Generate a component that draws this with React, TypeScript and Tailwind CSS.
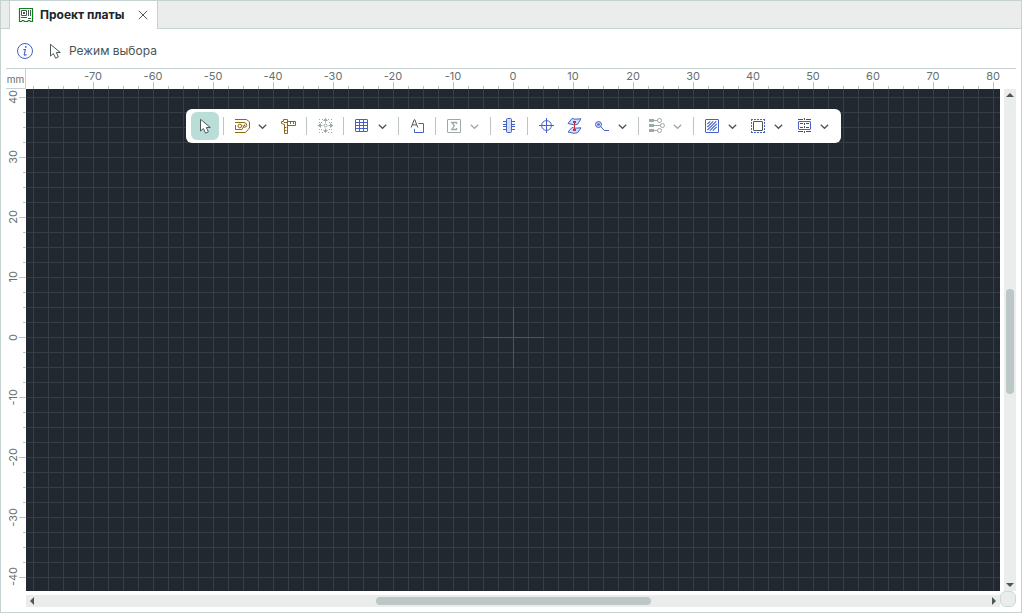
import React from "react";

const BLUE = "#4560cc";
const OCHRE = "#8f680f";
const DIM = "#9ba9a7";
const DARK = "#4c5856";

function Glyph({ color, children }: { color: string; children: React.ReactNode }) {
  return (
    <svg viewBox="0 0 28 28" className="size-7 shrink-0" fill="none" stroke={color} aria-hidden="true">
      {children}
    </svg>
  );
}

function CursorShape() {
  return (
    <path
      d="M9.5 7.3V19L12.4 16.6L14.6 21.2L17.4 19.9L15.3 15.5H19.3Z"
      fill="#fff"
      stroke={DARK}
      strokeLinejoin="round"
    />
  );
}

const cursor = (
  <Glyph color={DARK}>
    <CursorShape />
  </Glyph>
);

const track = (
  <Glyph color={OCHRE}>
    <path d="M7 7.5H18.5L21.5 10V16L17.5 20.5H7" />
    <path d="M7 10.5H16Q18.8 11 18.8 13.3Q18.8 15 16.8 15.3Q15 15.3 14.8 13.5" />
    <path d="M7.5 13V17.5H14L16.5 12.8" />
    <circle cx="11.8" cy="14" r="1.8" />
    <circle cx="16.7" cy="13.2" r="0.8" fill={OCHRE} stroke="none" />
  </Glyph>
);

const caliper = (
  <Glyph color={OCHRE}>
    <path d="M9.5 7.5H13.5V21.5H10.5V12.5L7.5 11.5V9.5H9.5Z" />
    <path d="M13.5 9.5H21.5V13.5H13.5M16.5 9.5V12M19.5 9.5V12M11 15.5H12.5M11 18.5H12.5M10 10.5H13" />
  </Glyph>
);

const spread = (
  <Glyph color={DIM}>
    <path
      d="M8 7.5H9M11 7.5H12M17 7.5H18M20 7.5H21M8 10.5H9M10 10.5H11M18 10.5H19M20 10.5H21M8 17.5H9M10 17.5H11M18 17.5H19M20 17.5H21M8 20.5H9M11 20.5H12M17 20.5H18M20 20.5H21"
    />
    <circle cx="14.5" cy="13.5" r="1.5" />
    <path
      d="M14.5 6L17 9H12ZM14.5 21L17 18H12ZM6.5 13.5L10 11V16ZM22.5 13.5L19 11V16Z"
      fill={DIM}
      stroke="none"
    />
    <path d="M14.5 8V10.5M14.5 16.5V19M9 13.5H11.5M17.5 13.5H20" />
  </Glyph>
);

const table = (
  <Glyph color={BLUE}>
    <rect x="7.5" y="7.5" width="12" height="12" rx="0.5" />
    <path d="M8 10.5H19M8 13.5H19M8 16.5H19M11.5 8V19M15.5 8V19" />
  </Glyph>
);

const textFrame = (
  <Glyph color={BLUE}>
    <path d="M15.5 11.5H20.5V20.5H11.5V17" />
    <path d="M8.2 15.5L11.2 7.7H11.8L14.8 15.5M9.3 12.9H13.7" stroke={DARK} />
  </Glyph>
);

const sum = (
  <Glyph color={DIM}>
    <rect x="7.5" y="7.5" width="13" height="13" rx="0.5" />
    <path d="M16.5 12V10.5H11.8L14.3 13.8L11.8 17.5H16.5V16" strokeWidth="1.3" />
  </Glyph>
);

const chip = (
  <Glyph color={BLUE}>
    <path d="M8 9.5H20M8 12.5H20M8 14.5H20M8 17.5H20" />
    <rect x="11.5" y="6.5" width="5" height="14" rx="1" fill="#d3defa" />
  </Glyph>
);

const target = (
  <Glyph color={BLUE}>
    <circle cx="14.5" cy="13.5" r="4.9" />
    <path d="M7 13.5H22M14.5 6V21" />
  </Glyph>
);

const layers = (
  <Glyph color={BLUE}>
    <g fill="#d3defa">
      <path d="M12 6.5L15 7.2L21 6.8L17.5 12.3L14 12.8L8 11.5Z" />
      <path d="M12 15.5L15 16.2L21 15.8L17.5 20.8L14 21.3L8 20Z" />
    </g>
    <path d="M14.5 10V18" stroke="#c4303a" />
    <path d="M13 10H16M13 18H16" stroke="#c4303a" strokeWidth="2" />
  </Glyph>
);

const lead = (
  <Glyph color={BLUE}>
    <circle cx="10.5" cy="12.5" r="3" fill="#d3defa" />
    <circle cx="10.5" cy="12.5" r="1.3" fill={BLUE} stroke="none" />
    <path d="M12.8 14.7L16.3 18.5H21" />
  </Glyph>
);

const nets = (
  <Glyph color={DIM}>
    <path d="M6 7H11V10H6ZM6 12H11V15H6ZM6 17H11V20H6Z" fill={DIM} stroke="none" />
    <path d="M11 8.5H14.5M11 13.5H17.5M11 18.5H14.5" />
    <circle cx="16.5" cy="8.5" r="2" />
    <circle cx="19.5" cy="13.5" r="2" />
    <circle cx="16.5" cy="18.5" r="2" />
  </Glyph>
);

const hatch = (
  <Glyph color={BLUE}>
    <rect x="7.5" y="7.5" width="13" height="13" rx="0.5" />
    <path d="M9.3 12.2L12.2 9.3M9.3 15.2L15.2 9.3M9.3 18.2L18.2 9.3M11.8 18.7L18.7 11.8M14.8 18.7L18.7 14.8" strokeWidth="1.2" />
  </Glyph>
);

const region = (
  <Glyph color={BLUE}>
    <path d="M7 7.5H21M7 20.5H21M7.5 7V21M20.5 7V21" strokeDasharray="2 1" />
    <rect x="9.5" y="9.5" width="9" height="9" rx="0.5" stroke={DARK} />
  </Glyph>
);

const section = (
  <Glyph color={BLUE}>
    <path d="M8 7.5H13M16 7.5H21M8 19.5H13M16 19.5H21M10 11.5H13M16 11.5H19M10 15.5H13M16 15.5H19" stroke={DARK} />
    <rect x="8.5" y="9.5" width="12" height="8" rx="0.5" />
    <path d="M14.5 6V8M14.5 11V13M14.5 14V16M14.5 19V21" stroke={DARK} />
  </Glyph>
);

type Tool = { label: string; icon: React.ReactNode; menu?: boolean; dim?: boolean; active?: boolean };

const groups: Tool[][] = [
  [{ label: "Выбор", icon: cursor, active: true }],
  [
    { label: "Трек", icon: track, menu: true },
    { label: "Измерение", icon: caliper },
  ],
  [{ label: "Размещение", icon: spread, dim: true }],
  [{ label: "Таблица", icon: table, menu: true }],
  [{ label: "Текст", icon: textFrame }],
  [{ label: "Размер", icon: sum, menu: true, dim: true }],
  [{ label: "Компонент", icon: chip }],
  [
    { label: "Отверстие", icon: target },
    { label: "Переход", icon: layers },
    { label: "Вывод", icon: lead, menu: true },
  ],
  [{ label: "Цепи", icon: nets, menu: true, dim: true }],
  [
    { label: "Заливка", icon: hatch, menu: true },
    { label: "Регион", icon: region, menu: true },
    { label: "Вырез", icon: section, menu: true },
  ],
];

function ToolButton({ tool }: { tool: Tool }) {
  return (
    <>
      <button
        aria-label={tool.label}
        disabled={tool.dim}
        className={tool.active ? "rounded-md bg-[#bbddd8]" : "rounded-md"}
      >
        {tool.icon}
      </button>
      {tool.menu && (
        <button aria-label={tool.label + ": меню"} disabled={tool.dim} className="flex w-[18px] items-center">
          <svg viewBox="0 0 13 28" className="h-7 w-[13px]" fill="none" aria-hidden="true">
            <path d="M2.8 12.8L6.5 16.3L10.2 12.8" stroke={tool.dim ? DIM : DARK} strokeWidth="1.3" />
          </svg>
        </button>
      )}
    </>
  );
}

function Toolbar() {
  return (
    <div role="toolbar" className="flex items-center rounded-md bg-white px-[5px] py-[3px]">
      {groups.map((group, i) => (
        <React.Fragment key={i}>
          {i > 0 && <span className="mr-1 ml-1 h-[18px] w-px bg-[#b9c6c4]" />}
          {group.map((tool) => (
            <ToolButton key={tool.label} tool={tool} />
          ))}
        </React.Fragment>
      ))}
    </div>
  );
}

const xMarks = [-70, -60, -50, -40, -30, -20, -10, 0, 10, 20, 30, 40, 50, 60, 70, 80];
const yMarks = [40, 30, 20, 10, 0, -10, -20, -30, -40];

function Arrow({ label, d }: { label: string; d: string }) {
  return (
    <button aria-label={label} className="size-3 shrink-0">
      <svg viewBox="0 0 12 12" className="size-3" aria-hidden="true">
        <path d={d} fill={DARK} />
      </svg>
    </button>
  );
}

export default function App() {
  return (
    <div className="flex h-screen flex-col border border-[#c6d2d1] bg-white font-['Inter','Noto_Sans',sans-serif] text-[#4a5553]">
      <header className="flex h-7 shrink-0 bg-[#ebedec]">
        <span className="w-2 border-b border-[#c6d2d1]" />
        <div className="flex items-center border-x border-[#c6d2d1] bg-white pr-[6px] pl-2">
          <svg viewBox="0 0 16 16" className="size-4" fill="none" aria-hidden="true">
            <path d="M1.5 1.5H14.5V14.5H12.5L11.5 13.5H10.5L9.5 14.5H6.5L5.5 13.5H4.5L3.5 14.5H1.5Z" stroke="#12801c" strokeWidth="1.2" />
            <path d="M3.5 3.5H8.5V8.5H3.5ZM5 5.5H7M5 6.5H7M10.5 3V9M12.5 3V9M3 10.5H9M10 11.5H13" stroke={DARK} />
          </svg>
          <span className="ml-[6px] text-xs font-bold whitespace-nowrap text-[#20252a]">Проект платы</span>
          <button aria-label="Закрыть" className="ml-[11px]">
            <svg viewBox="0 0 16 16" className="size-4" fill="none" stroke={DARK} aria-hidden="true">
              <path d="M3.8 3.8L12.2 12.2M12.2 3.8L3.8 12.2" />
            </svg>
          </button>
        </div>
        <span className="flex-1 border-b border-[#c6d2d1]" />
      </header>

      <div className="flex h-[39px] shrink-0 items-center pt-1 pl-[15px]">
        <button aria-label="Информация">
          <svg viewBox="0 0 18 18" className="size-[18px]" fill="none" stroke={BLUE} aria-hidden="true">
            <circle cx="9" cy="9" r="7.5" />
            <path d="M7.3 7.5H9.4L8.2 12.5Q8.2 13.3 9 13.2L10.6 12.4" strokeWidth="1.1" />
            <circle cx="9.8" cy="4.9" r="0.9" fill={BLUE} stroke="none" />
          </svg>
        </button>
        <svg viewBox="4 5 20 18" className="ml-[11px] h-[18px] w-5" aria-hidden="true">
          <CursorShape />
        </svg>
        <span className="ml-1 text-xs">Режим выбора</span>
      </div>

      <main className="grid min-h-0 flex-1 grid-cols-[20px_minmax(0,1fr)_16px] grid-rows-[21px_minmax(0,1fr)_16px] px-[5px] pb-[5px] text-[11px] leading-3 text-[#65706e]">
        <div className="border-t border-r border-b border-[#c6d2d1] pt-1 text-center text-[10px]">mm</div>
        <div className="flex overflow-hidden border-t border-[#c6d2d1] bg-[linear-gradient(to_right,#b9c6c4_1px,transparent_1px)] bg-[length:15px_3px] bg-[position:7px_bottom] bg-repeat-x pl-[37px]">
          {xMarks.map((n) => (
            <span key={n} className="flex w-[60px] shrink-0 flex-col items-center justify-between pt-px">
              {n}
              <span className="ml-px h-[7px] w-px bg-[#b9c6c4]" />
            </span>
          ))}
        </div>
        <div className="border-t border-[#c6d2d1]" />

        <div className="overflow-hidden bg-[linear-gradient(to_bottom,#b9c6c4_1px,transparent_1px)] bg-[length:3px_15px] bg-[position:right_8px] bg-repeat-y">
          <div className="-mt-[22px]">
            {yMarks.map((n) => (
              <span key={n} className="flex h-[60px] items-center justify-between pl-px">
                <span className="rotate-180 [writing-mode:vertical-rl]">{n}</span>
                <span className="mt-px h-px w-[7px] bg-[#b9c6c4]" />
              </span>
            ))}
          </div>
        </div>
        <div className="relative flex items-start justify-center overflow-hidden bg-[#22282f] bg-[linear-gradient(to_right,#373e45_1px,transparent_1px),linear-gradient(to_bottom,#373e45_1px,transparent_1px)] bg-[length:15px_15px] bg-[position:7px_8px] pt-5 pl-px">
          <svg viewBox="0 0 61 61" className="absolute top-[218px] left-[457px] size-[61px]" stroke="#b02c2e" aria-hidden="true">
            <path d="M0 30.5H61M30.5 0V61" />
          </svg>
          <Toolbar />
        </div>
        <div className="ml-1 flex w-3 flex-col items-center justify-between bg-[#ebedec]">
          <Arrow label="Вверх" d="M6 4L10 8H2Z" />
          <span className="mt-[2px] h-[105px] w-2 rounded bg-[#bcc8c7]" />
          <Arrow label="Вниз" d="M6 8L10 4H2Z" />
        </div>

        <div />
        <div className="mt-1 flex h-3 items-center justify-between bg-[#ebedec]">
          <Arrow label="Влево" d="M4 6L8 2V10Z" />
          <span className="h-2 w-[275px] rounded bg-[#bcc8c7]" />
          <Arrow label="Вправо" d="M8 6L4 2V10Z" />
        </div>
        <button aria-label="Обзор" className="size-4 rounded-md border border-[#cbd8d6] bg-[#ebedec]" />
      </main>
    </div>
  );
}
